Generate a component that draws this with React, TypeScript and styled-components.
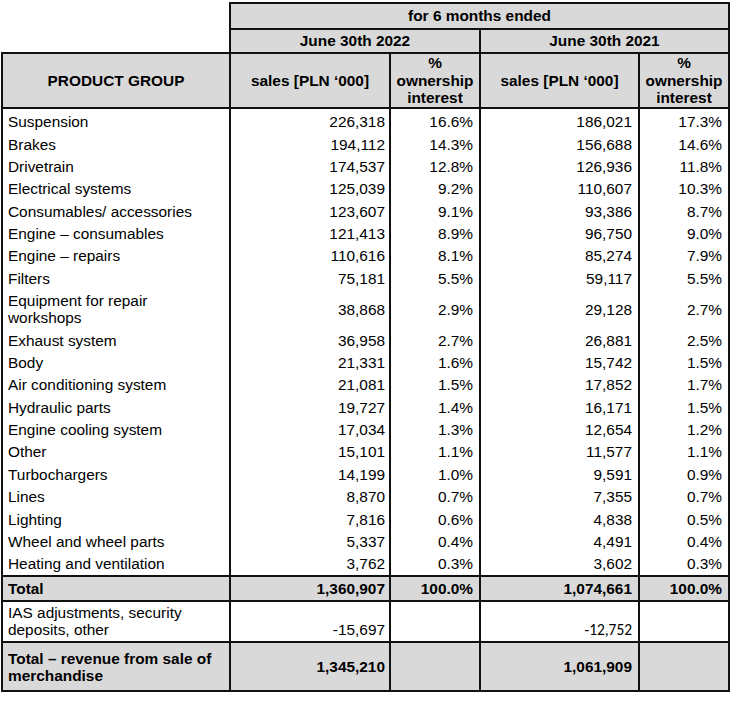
import React from 'react';
import styled, { createGlobalStyle } from 'styled-components';

const GlobalStyle = createGlobalStyle`
  body {
    margin: 0;
    background: #fff;
    font-family: "Liberation Sans", Arial, sans-serif;
    color: #000;
  }
`;

const Page = styled.div`
  padding: 2px 0 0 1px;
`;

const Table = styled.table`
  border-collapse: collapse;
  table-layout: fixed;
  width: 727px;
  font-size: 15.4px;
  line-height: 17px;
`;

const Col = styled.col<{ $w: number }>`
  width: ${(p) => p.$w}px;
`;

const Blank = styled.th`
  border: none;
  background: #fff;
`;

const HeadCell = styled.th<{ $h?: number }>`
  background: #d9d9d9;
  border: 2px solid #111;
  font-weight: bold;
  text-align: center;
  vertical-align: middle;
  padding: 0 3px;
  line-height: 17.5px;
  height: ${(p) => p.$h ?? 22}px;
`;

const Row = styled.tr<{ $kind?: 'total' | 'plain' | 'grand'; $edge?: 'first' | 'last' }>`
  background: ${(p) => (p.$kind === 'total' || p.$kind === 'grand' ? '#d9d9d9' : '#fff')};
  font-weight: ${(p) => (p.$kind === 'total' || p.$kind === 'grand' ? 'bold' : 'normal')};
  & > td {
    border-left: 2px solid #111;
    border-right: 2px solid #111;
    ${(p) => (p.$kind ? 'border-top: 2px solid #111; border-bottom: 2px solid #111;' : '')}
    ${(p) => (p.$edge === 'first' ? 'padding-top: 4.2px;' : '')}
    ${(p) => (p.$edge === 'last' ? 'padding-bottom: 3px;' : '')}
  }
`;

const Label = styled.td<{ $h?: number }>`
  text-align: left;
  white-space: pre-line;
  padding: 2.7px 4px 2.7px 5px;
  vertical-align: middle;
  height: ${(p) => p.$h ?? 17}px;
`;

const Num = styled.td<{ $align?: 'bottom' | 'middle'; $pad?: number }>`
  text-align: right;
  padding: 2.7px ${(p) => p.$pad ?? 4}px 2.7px 4px;
  vertical-align: ${(p) => p.$align ?? 'middle'};
`;

type Item = [string, string, string, string, string];

const items: Item[] = [
  ['Suspension', '226,318', '16.6%', '186,021', '17.3%'],
  ['Brakes', '194,112', '14.3%', '156,688', '14.6%'],
  ['Drivetrain', '174,537', '12.8%', '126,936', '11.8%'],
  ['Electrical systems', '125,039', '9.2%', '110,607', '10.3%'],
  ['Consumables/ accessories', '123,607', '9.1%', '93,386', '8.7%'],
  ['Engine – consumables', '121,413', '8.9%', '96,750', '9.0%'],
  ['Engine – repairs', '110,616', '8.1%', '85,274', '7.9%'],
  ['Filters', '75,181', '5.5%', '59,117', '5.5%'],
  ['Equipment for repair\nworkshops', '38,868', '2.9%', '29,128', '2.7%'],
  ['Exhaust system', '36,958', '2.7%', '26,881', '2.5%'],
  ['Body', '21,331', '1.6%', '15,742', '1.5%'],
  ['Air conditioning system', '21,081', '1.5%', '17,852', '1.7%'],
  ['Hydraulic parts', '19,727', '1.4%', '16,171', '1.5%'],
  ['Engine cooling system', '17,034', '1.3%', '12,654', '1.2%'],
  ['Other', '15,101', '1.1%', '11,577', '1.1%'],
  ['Turbochargers', '14,199', '1.0%', '9,591', '0.9%'],
  ['Lines', '8,870', '0.7%', '7,355', '0.7%'],
  ['Lighting', '7,816', '0.6%', '4,838', '0.5%'],
  ['Wheel and wheel parts', '5,337', '0.4%', '4,491', '0.4%'],
  ['Heating and ventilation', '3,762', '0.3%', '3,602', '0.3%'],
];

const Calibri = styled.span`
  font-family: Carlito, "Liberation Sans", sans-serif;
`;

export default function App() {
  return (
    <Page>
      <GlobalStyle />
      <Table>
        <colgroup>
          <Col $w={228} />
          <Col $w={160} />
          <Col $w={90} />
          <Col $w={159} />
          <Col $w={90} />
        </colgroup>
        <thead>
          <tr>
            <Blank />
            <HeadCell colSpan={4} $h={24}>for 6 months ended</HeadCell>
          </tr>
          <tr>
            <Blank />
            <HeadCell colSpan={2} $h={22}>June 30th 2022</HeadCell>
            <HeadCell colSpan={2} $h={22}>June 30th 2021</HeadCell>
          </tr>
          <tr>
            <HeadCell $h={53}>PRODUCT GROUP</HeadCell>
            <HeadCell>sales [PLN ‘000]</HeadCell>
            <HeadCell>%<br />ownership<br />interest</HeadCell>
            <HeadCell>sales [PLN ‘000]</HeadCell>
            <HeadCell>%<br />ownership<br />interest</HeadCell>
          </tr>
        </thead>
        <tbody>
          {items.map(([name, s22, p22, s21, p21], i) => (
            <Row key={name} $edge={i === 0 ? 'first' : i === items.length - 1 ? 'last' : undefined}>
              <Label $h={name.includes('\n') ? 34 : 17}>{name}</Label>
              <Num>{s22}</Num>
              <Num $pad={6}>{p22}</Num>
              <Num $pad={6}>{s21}</Num>
              <Num $pad={6}>{p21}</Num>
            </Row>
          ))}
          <Row $kind="total">
            <Label>Total</Label>
            <Num>1,360,907</Num>
            <Num $pad={6}>100.0%</Num>
            <Num $pad={6}>1,074,661</Num>
            <Num $pad={6}>100.0%</Num>
          </Row>
          <Row $kind="plain">
            <Label $h={28}>IAS adjustments, security deposits, other</Label>
            <Num $align="bottom">-15,697</Num>
            <Num $pad={6} />
            <Num $pad={6} $align="bottom"><Calibri>-12,752</Calibri></Num>
            <Num $pad={6} />
          </Row>
          <Row $kind="grand">
            <Label $h={42}>Total – revenue from sale of merchandise</Label>
            <Num>1,345,210</Num>
            <Num $pad={6} />
            <Num $pad={6}>1,061,909</Num>
            <Num $pad={6} />
          </Row>
        </tbody>
      </Table>
    </Page>
  );
}
